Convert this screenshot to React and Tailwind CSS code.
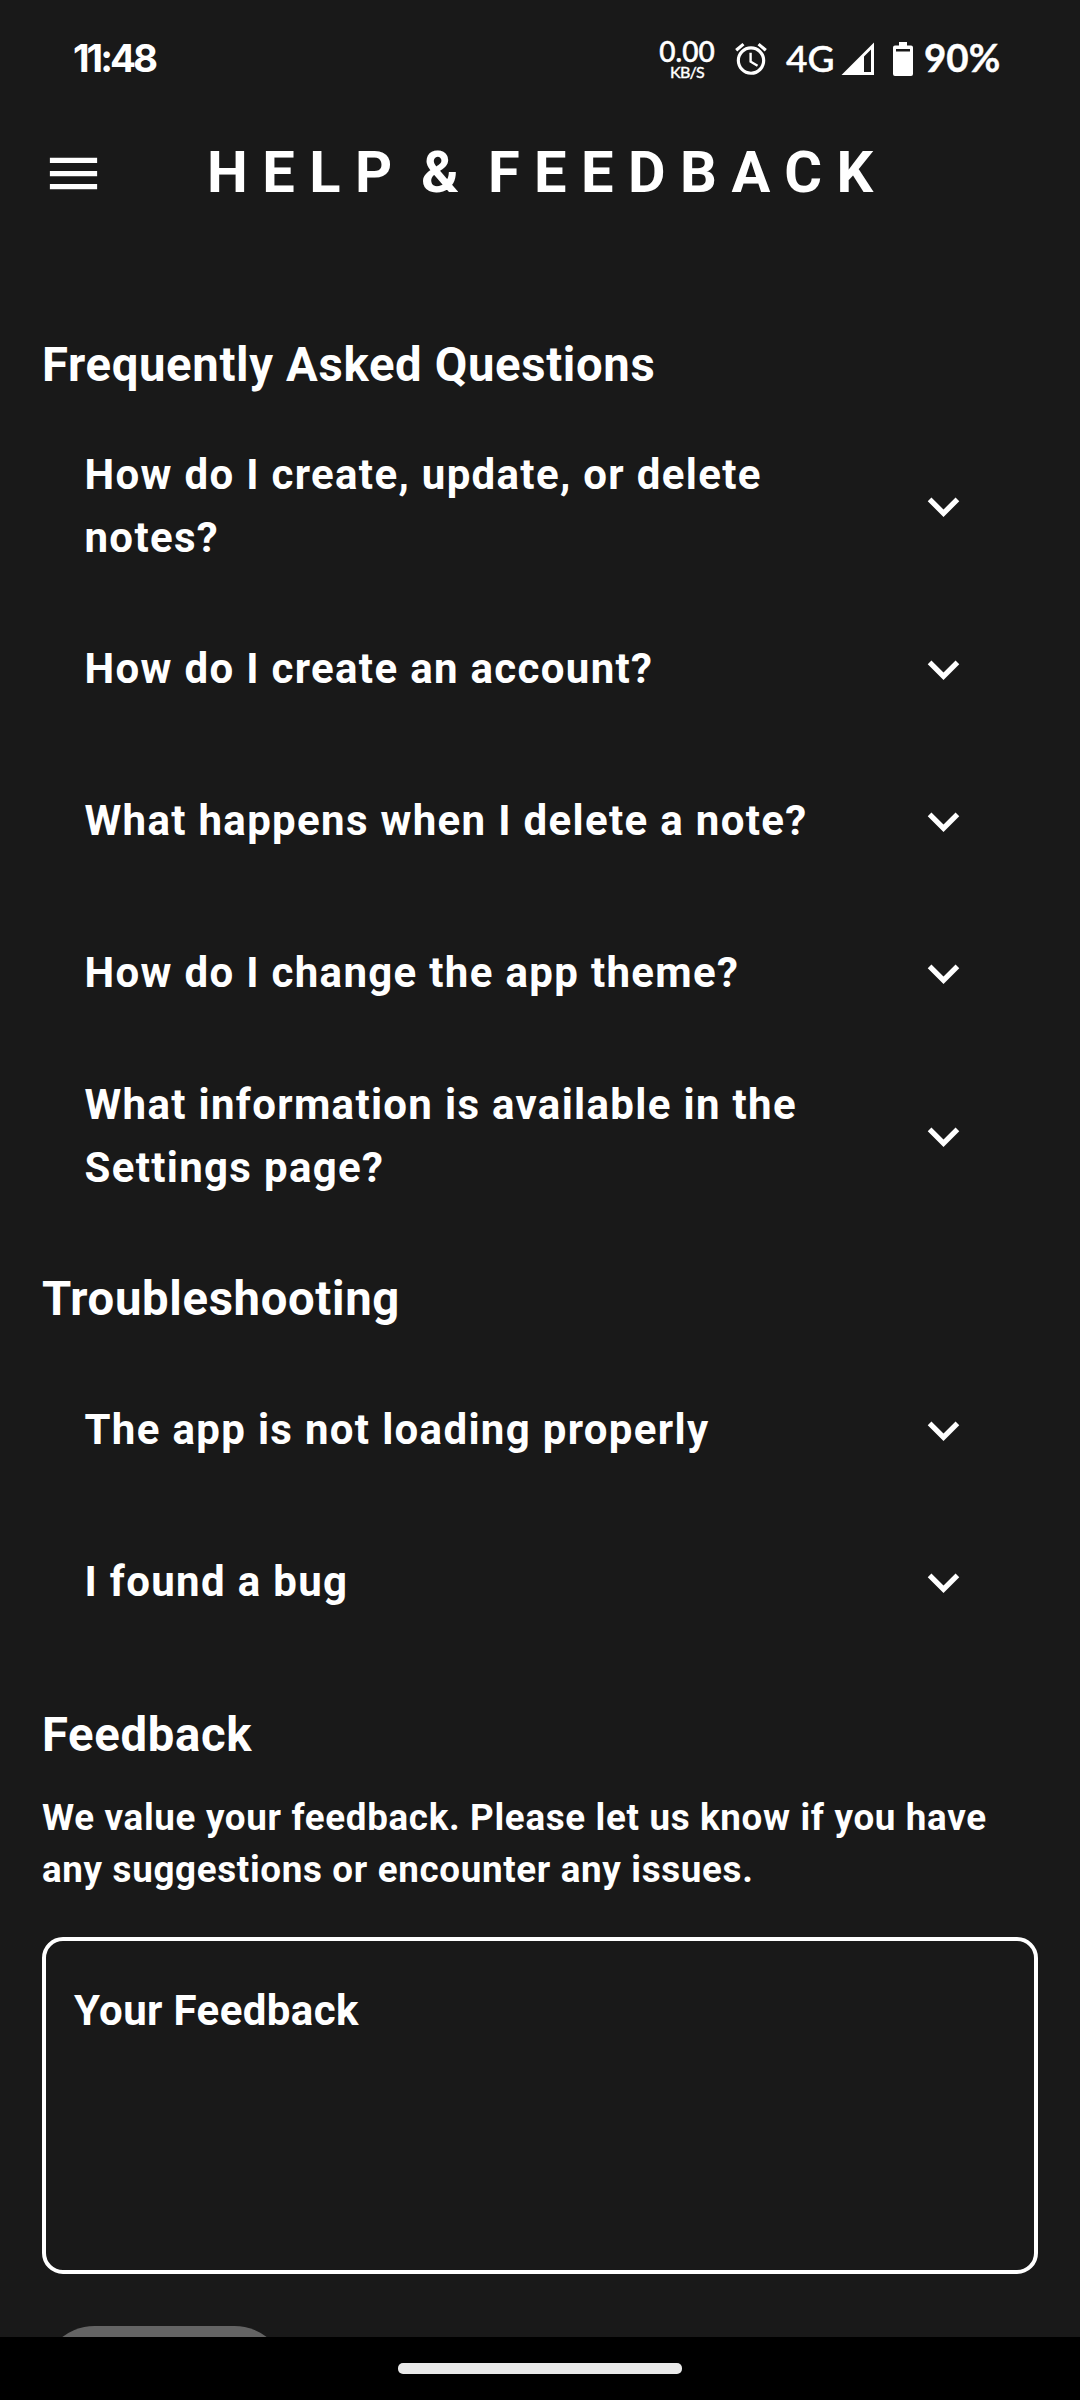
const faqs = [
  { q: "How do I create, update, or delete notes?", tall: true },
  { q: "How do I create an account?" },
  { q: "What happens when I delete a note?" },
  { q: "How do I change the app theme?" },
  { q: "What information is available in the Settings page?", tall: true },
];

const issues = [{ q: "The app is not loading properly" }, { q: "I found a bug" }];

function StatusBar() {
  return (
    <div className="flex h-[100px] items-start pl-[73px] pr-[81px] font-['Lato',sans-serif]">
      <span className="mt-[36px] font-['Inter',sans-serif] text-[38.500px] leading-[44px] font-bold tracking-[-3px]">11:48</span>
      <div className="ml-auto mt-[37px] flex w-[56px] flex-col items-center">
        <span className="text-[28px] leading-[28px] font-medium [-webkit-text-stroke:0.5px_white]">0.00</span>
        <span className="text-[16px] leading-[14px] font-medium tracking-[-0.800px] [-webkit-text-stroke:0.3px_white]">KB/S</span>
      </div>
      <svg className="ml-[17px] mt-[40px] h-[38px] w-[38px]" viewBox="0 0 24 24" fill="currentColor">
        <path d="M22 5.72l-4.6-3.86-1.29 1.53 4.6 3.86L22 5.72zM7.88 3.39 6.6 1.86 2 5.71l1.29 1.53 4.59-3.85zM12.5 8H11v6l4.75 2.85.75-1.23-4-2.37V8zM12 4c-4.97 0-9 4.03-9 9s4.02 9 9 9a9 9 0 1 0 0-18zm0 16c-3.87 0-7-3.13-7-7s3.13-7 7-7 7 3.13 7 7-3.13 7-7 7z" />
      </svg>
      <span className="ml-[16px] mr-[2px] mt-[36px] w-[48px] whitespace-nowrap text-[37px] leading-[44px] font-medium [-webkit-text-stroke:0.5px_white]">4G</span>
      <svg className="ml-[5px] mt-[42px] h-[33px] w-[33px]" viewBox="0 0 33 33">
        <path d="M0.500 33L33 0.500V33Z M30 7.500L23 14.500V30H30Z" fill="currentColor" fillRule="evenodd" />
      </svg>
      <svg className="ml-[19px] mt-[42px] h-[34px] w-[20px]" viewBox="0 0 20 34">
        <path d="M6 0h8v3.500h4a2 2 0 0 1 2 2V32a2 2 0 0 1-2 2H2a2 2 0 0 1-2-2V5.500a2 2 0 0 1 2-2h4z M3 7v2.500h14V7z" fill="currentColor" fillRule="evenodd" />
      </svg>
      <span className="ml-[11px] mt-[35px] w-[75px] whitespace-nowrap text-[38.5px] leading-[44px] font-bold [-webkit-text-stroke:0.4px_white]">90%</span>
    </div>
  );
}

function Question({ q, tall }) {
  return (
    <div className={`flex items-center justify-between pl-[42.5px] pr-[63px] ${tall ? "h-[174px]" : "h-[152px]"}`}>
      <span className={`w-[740px] text-[42px] leading-[63px] font-bold tracking-[1.32px] ${tall ? "mb-[1px]" : "mb-[2px]"}`}>{q}</span>
      <svg className="h-[63px] w-[63px]" viewBox="0 0 24 24" fill="currentColor">
        <path d="M16.590 8.590 12 13.170 7.410 8.590 6 10l6 6 6-6z" />
      </svg>
    </div>
  );
}

function Heading({ children }) {
  return <h2 className="text-[47.250px] leading-[56px] font-bold tracking-[0.660px]">{children}</h2>;
}

export default function App() {
  return (
    <div className="flex h-[2400px] w-[1080px] flex-col overflow-hidden bg-[#191919] font-['Roboto',sans-serif] text-white">
      <StatusBar />
      <header className="flex h-[147px] items-center pl-[42px]">
        <svg className="h-[63px] w-[63px]" viewBox="0 0 24 24" fill="currentColor">
          <path d="M3 18h18v-2H3zM3 13h18v-2H3zM3 6v2h18V6z" />
        </svg>
        <h1 className="mb-[3px] ml-[102px] whitespace-nowrap text-[57.750px] leading-[68px] font-bold tracking-[14.5px] [word-spacing:-14.5px]">HELP &amp; FEEDBACK</h1>
      </header>
      <main className="flex h-[2090px] flex-col overflow-hidden px-[42px] pt-[90px]">
        <Heading>Frequently Asked Questions</Heading>
        <div className="mt-[26.4px]">
          {faqs.map((f) => <Question key={f.q} {...f} />)}
        </div>
        <div className="mt-[47.35px]"><Heading>Troubleshooting</Heading></div>
        <div className="mt-[27.75px]">
          {issues.map((f) => <Question key={f.q} {...f} />)}
        </div>
        <div className="mt-[48.25px]"><Heading>Feedback</Heading></div>
        <p className="mt-[29px] text-[36.750px] leading-[52px] font-bold tracking-[0.670px]">
          We value your feedback. Please let us know if you have any suggestions or encounter any issues.
        </p>
        <div className="mt-[41px] h-[337px] shrink-0 rounded-[21px] border-4 border-white px-[28px] pt-[45px] text-[42px] leading-[50px] font-bold tracking-[0.380px]">
          Your Feedback
        </div>
        <div className="mt-[52px] h-[105px] w-[245px] shrink-0 rounded-full bg-[#646464]" />
      </main>
      <footer className="flex h-[63px] shrink-0 justify-center bg-black pt-[26px]">
        <div className="h-[11px] w-[284px] rounded-[5px] bg-[#e9e9e9]" />
      </footer>
    </div>
  );
}
